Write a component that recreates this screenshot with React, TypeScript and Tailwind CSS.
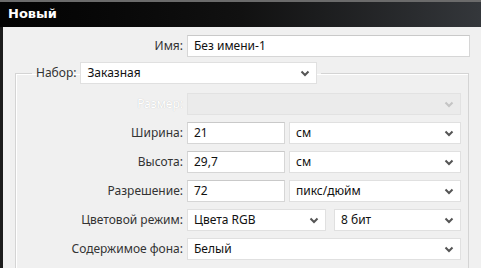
import React from 'react';

const font = { fontFamily: '"Noto Sans", "Open Sans", sans-serif' };

function Chevron({ disabled }: { disabled?: boolean }) {
  return (
    <svg width="10" height="7" viewBox="0 0 10 7" className="shrink-0">
      <polyline
        points="1.5,1.5 5,5 8.5,1.5"
        fill="none"
        stroke={disabled ? '#c4c4c4' : '#555'}
        strokeWidth="2"
      />
    </svg>
  );
}

function Field({ value, className = '' }: { value: string; className?: string }) {
  return (
    <div className={`h-[22px] flex items-center px-[6px] bg-white border border-[#d6d6d6] border-t-[#c9c9c9] text-[12px] text-[#111] ${className}`}>
      {value}
    </div>
  );
}

function Select({ value, className = '', disabled }: { value: string; className?: string; disabled?: boolean }) {
  return (
    <div
      className={`h-[22px] flex items-center justify-between pl-[6px] pr-[6px] border text-[12px] ${
        disabled ? 'bg-[#ebebeb] border-[#e2e2e2]' : 'bg-white border-[#e0e0e0] text-[#111]'
      } ${className}`}
    >
      <span>{value}</span>
      <Chevron disabled={disabled} />
    </div>
  );
}

function Label({ text, disabled }: { text: string; disabled?: boolean }) {
  return (
    <div
      className={`h-[22px] flex items-center justify-end text-[12px] ${
        disabled ? 'text-white [text-shadow:0_0_1px_#bdbdbd]' : 'text-[#333]'
      }`}
    >
      {text}
    </div>
  );
}

export default function App() {
  return (
    <div className="w-[481px] h-[268px] overflow-hidden bg-[#f0f0f0] flex flex-col" style={font}>
      <div className="h-[27px] shrink-0 border-t-2 border-[#6b6b6b] bg-gradient-to-r from-[#030303] via-[#111] to-[#34373b] flex items-center pl-[8px] pb-[2px]">
        <span className="text-white font-bold text-[13px]" style={{ fontFamily: '"DejaVu Sans", sans-serif' }}>
          Новый
        </span>
      </div>

      <div className="flex-1 border-l-[3px] border-[#1c1c1c] pt-[8px]">
        <div className="grid grid-cols-[180px_283px] gap-x-[4px]">
          <Label text="Имя:" />
          <Field value="Без имени-1" />
        </div>

        <fieldset className="ml-[12px] mr-[12px] mt-[5px] border border-[#d4d4d4] shadow-[inset_1px_1px_0_#fff] pr-[7px] pb-[20px]">
          <legend className="ml-[16px] px-[4px] flex items-center gap-[4px]">
            <span className="text-[12px] text-[#333]">Набор:</span>
            <Select value="Заказная" className="w-[237px]" />
          </legend>

          <div className="grid grid-cols-[167px_1fr] gap-x-[4px] gap-y-[7px] mt-[9px]">
            <Label text="Размер:" disabled />
            <Select value="" disabled />

            <Label text="Ширина:" />
            <div className="flex gap-[4px]">
              <Field value="21" className="w-[98px]" />
              <Select value="см" className="flex-1" />
            </div>

            <Label text="Высота:" />
            <div className="flex gap-[4px]">
              <Field value="29,7" className="w-[98px]" />
              <Select value="см" className="flex-1" />
            </div>

            <Label text="Разрешение:" />
            <div className="flex gap-[4px]">
              <Field value="72" className="w-[98px]" />
              <Select value="пикс/дюйм" className="flex-1" />
            </div>

            <Label text="Цветовой режим:" />
            <div className="flex gap-[8px]">
              <Select value="Цвета RGB" className="w-[139px]" />
              <Select value="8 бит" className="flex-1" />
            </div>

            <Label text="Содержимое фона:" />
            <Select value="Белый" />
          </div>
        </fieldset>
      </div>
    </div>
  );
}
